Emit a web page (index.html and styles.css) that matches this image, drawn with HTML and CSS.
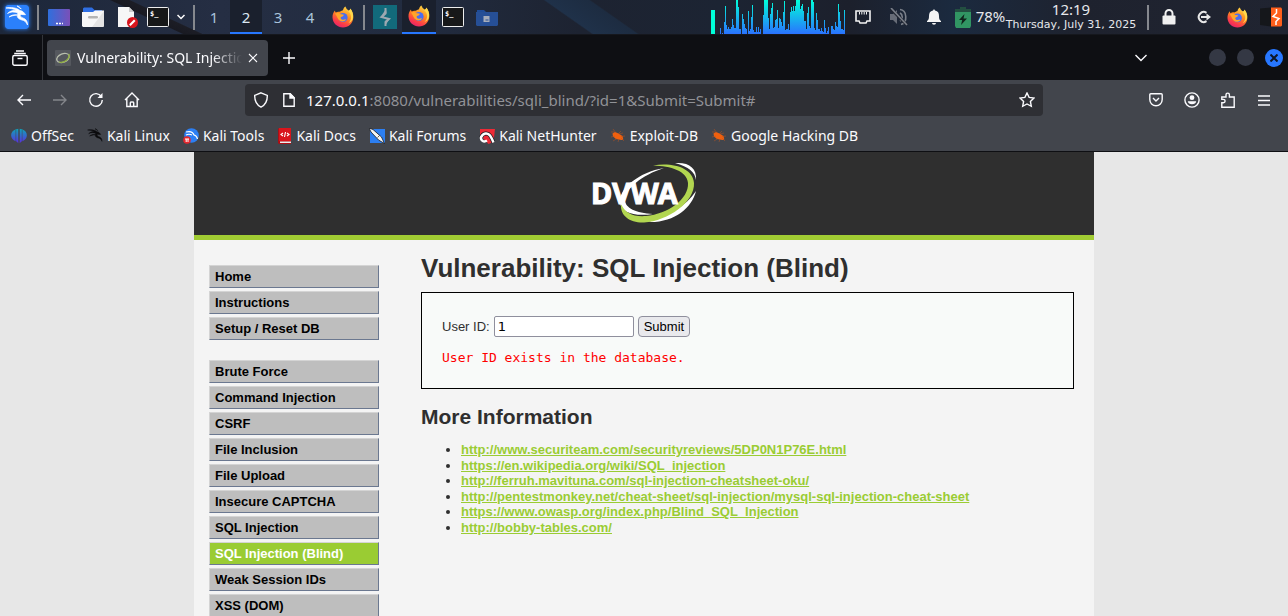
FILE: index.html
```html
<!DOCTYPE html>
<html lang="en">
<head>
<meta charset="utf-8">
<title>Vulnerability: SQL Injection (Blind)</title>
<link rel="stylesheet" href="styles.css">
</head>
<body>
<svg class="defs" width="0" height="0" aria-hidden="true">
  <defs>
    <linearGradient id="fox-body" x1="0.8" y1="0" x2="0.3" y2="1"><stop offset="0" stop-color="#ffe14a"/><stop offset="0.45" stop-color="#ff8a1e"/><stop offset="0.8" stop-color="#fb3a4b"/><stop offset="1" stop-color="#e3246c"/></linearGradient>
    <linearGradient id="app-grad"><stop offset="0" stop-color="#2f6fdd"/><stop offset="1" stop-color="#7a50b8"/></linearGradient>
    <linearGradient id="graph-grad" gradientUnits="userSpaceOnUse" x1="0" y1="0" x2="0" y2="34"><stop offset="0" stop-color="#00ffd9"/><stop offset="1" stop-color="#2a72ff"/></linearGradient>
    <linearGradient id="off-grad" x1="0" y1="0" x2="0" y2="1"><stop offset="0" stop-color="#0fa3b8"/><stop offset="1" stop-color="#5b2ce0"/></linearGradient>
  </defs>
  <symbol id="firefox" viewBox="0 0 22 22">
    <path d="M13.500 0.500c.4 2 1.700 3 3 4.300 1.500-.2 1.800-2.300 1.800-2.300 2 2.500 3.300 5.500 3 9C21 17.500 16.500 21.500 11 21.500S.7 17.300.5 11.500C.4 8.500 1.500 6 3 4.500c0 1 .3 1.600.8 2C5 5.500 6.500 5.500 7.500 5.800 9.500 5 10 4.500 11 4.200 11.300 2.500 12.300 1 13.500.5z" fill="url(#fox-body)"/>
    <path d="M14 1c0 3 4.500 5 5 9 .5 3.500-1 5.500-2.500 7 3-1 5-4 4.500-8-.3-3-1.500-5-2.700-6.200-.2 1-.8 2-1.800 2C15.500 4 14.300 2.800 14 1z" fill="#ffd84c"/>
    <circle cx="11" cy="11.500" r="4.600" fill="#4a6df0"/>
    <path d="M3 7.500c2-1 4.500-.5 5.500.8 1.500 0 3 .2 3.300.6-.3 1.300-2 1.600-3 2.300-.5.800.2 2 1.200 2.300 2 .6 3-.6 4-.2-1 2.300-4 2.700-6 1.500C5.500 13.500 5 10 3 7.500z" fill="#ffa52a"/>
  </symbol>
  <symbol id="terminal" viewBox="0 0 22 20">
    <rect x="0.500" y="0.500" width="21" height="19" rx="1" fill="#171819" stroke="#eee"/>
    <text x="3" y="9" font-family="DejaVu Sans Mono, monospace" font-weight="700" font-size="7" fill="#fff">$_</text>
  </symbol>
  <symbol id="dragon" viewBox="0 0 24 24">
    <path d="M1 3c5-1 10-.5 14 2.500 3 .5 4 2 5.500 4.200-1.500.3-3-.4-4.500-.3-2 1 .3 3 2 3.600 3 1 4.500 3 4.500 7-1.200-3-3-4.500-5.500-5-4-.8-6-3.500-4-7C9 6.500 5.500 6.800 2.500 8.500 5 5.800 8.500 5 12 5.500 8.500 3.800 5 3.200 1 3zM4 12c2.500-2 5-2.700 8-2-3 .2-5.300 1-8 2zM12 1c2 .5 3.300 1.600 4.200 3z" fill="currentColor" stroke="currentColor" stroke-width="0.700"/>
  </symbol>
  <symbol id="spider" viewBox="0 0 16 16">
    <path d="M2.500 5.500 5 4l3.500 1.500L12.500 8l.8 3.500L11.500 12 6 11 3 8.500z" fill="#f0600e"/>
    <path d="M3 1l3 4M1 4h3M1 9l4-1M3 13l4-2.500M8 14l1-3M14 13l-3-3M15 8l-4 .5M11 3L8 6M13 5l-4 1" stroke="#bd541e" stroke-width="0.500" fill="none"/>
  </symbol>
</svg>

<header class="panel">
  <div class="panel-group">
    <button class="slot" aria-label="Applications"><svg class="kali" width="24" height="24" viewBox="0 0 24 24"><rect width="24" height="24" rx="2" fill="#2b80fb"/><use href="#dragon" color="#fff"/></svg></button>
    <i class="sep"></i>
    <button class="slot" aria-label="Desktop"><svg width="22" height="17" viewBox="0 0 22 17"><rect width="22" height="17" rx="1" fill="url(#app-grad)"/><path d="M8 14.500h2M11 14.500h2M14 14.500h1" stroke="#fff" stroke-width="1.500"/></svg></button>
    <button class="slot" aria-label="Files"><svg width="22" height="20" viewBox="0 0 22 20"><path d="M1 6V1.500L2 .500h8l2.500 2.500H20V8H1z" fill="#2f6fe4"/><path d="M0 5h11l2-1.500h9V19l-1 1H1l-1-1z" fill="#f7f7f7"/><path d="M22 4v15l-1 1H10z" fill="#e4e4e4"/><rect x="6" y="9" width="10" height="2.500" rx="1.200" fill="#b4b4b4"/></svg></button>
    <button class="slot" aria-label="Text editor"><svg width="22" height="22" viewBox="0 0 22 22"><path d="M2 1h11l5 5v15H2z" fill="#f6f6f6"/><path d="M13 1l5 5h-5z" fill="#ccc"/><circle cx="16.500" cy="16.500" r="5.500" fill="#d8151d"/><path d="M13.800 19.200l5-5" stroke="#fff" stroke-width="2.200"/></svg></button>
    <button class="slot small" aria-label="Terminal"><svg width="22" height="20"><use href="#terminal"/></svg></button>
    <button class="slot tiny" aria-label="More terminals"><svg width="8" height="6" viewBox="0 0 8 6" fill="none" stroke="#fff" stroke-width="1.500"><path d="M.5 1L4 4.500 7.500 1"/></svg></button>
    <i class="sep"></i>
    <button class="ws">1</button><button class="ws active">2</button><button class="ws">3</button><button class="ws">4</button>
    <button class="slot" aria-label="Firefox"><svg width="22" height="22"><use href="#firefox"/></svg></button>
    <i class="sep"></i>
    <button class="slot" aria-label="Burp Suite"><svg width="24" height="24" viewBox="0 0 24 24"><rect width="24" height="24" fill="#126a7b"/><path d="M12.500 3v5.500l-4 3.500 7.500 2-3.500 3v4" stroke="#9ca8b1" stroke-width="2" fill="none"/><path d="M13 4l-5.500 8H10l3.500-4zM16.500 14l-4.500 7v-5z" fill="#9ca8b1"/></svg></button>
    <button class="slot active" aria-label="Firefox window"><svg width="22" height="22"><use href="#firefox"/></svg></button>
    <button class="slot" aria-label="Terminal window"><svg width="22" height="20"><use href="#terminal"/></svg></button>
    <button class="slot" aria-label="Folder window"><svg width="22" height="17" viewBox="0 0 22 17"><path d="M1 3V1h7l2 2h11v3H1z" fill="#1f4c97"/><path d="M0 3h22v13l-1 1H1l-1-1z" fill="#264f96"/><rect x="7.500" y="7" width="6" height="6" fill="#a6adbb"/><path d="M9.500 10.500h3v1h-3z" fill="#264f96"/></svg></button>
  </div>
  <div class="panel-group">
    <svg class="graph" width="134" height="34" viewBox="10 0 134 34" aria-label="CPU graph"><path d="M10 34V10h4v24z" fill="#00ffd9"/><path fill="none" stroke="url(#graph-grad)" d="M19.500 34v-6M21.500 34v-1M23.500 34v-12M24.500 34v-28M25.500 34v-9M26.500 34v-5M27.500 34v-7M28.500 34v-5M29.500 34v-5M30.500 34v-7M31.500 34v-15M32.500 34v-9M33.500 34v-6M34.500 34v-6M35.500 34v-34M36.500 34v-34M37.500 34v-27M38.500 34v-5M39.500 34v-5M41.500 34v-20M42.500 34v-15M43.500 34v-10M44.500 34v-6M45.500 34v-5M47.500 34v-23M48.500 34v-3M49.500 34v-5M50.500 34v-17M51.500 34v-29M52.500 34v-4M53.500 34v-2M54.500 34v-2M55.500 34v-7M56.500 34v-2M57.500 34v-7M58.500 34v-2M59.500 34v-5M62.500 34v-19M63.500 34v-34M64.500 34v-34M65.500 34v-34M66.500 34v-34M67.500 34v-16M68.500 34v-5M69.500 34v-20M70.500 34v-26M71.500 34v-31M72.500 34v-6M73.500 34v-7M74.500 34v-14M75.500 34v-15M76.500 34v-24M77.500 34v-6M78.500 34v-16M79.500 34v-15M80.500 34v-12M81.500 34v-8M82.500 34v-22M83.500 34v-33M84.500 34v-4M85.500 34v-5M86.500 34v-5M87.500 34v-10M88.500 34v-4M89.500 34v-22M90.500 34v-27M91.500 34v-23M92.500 34v-28M93.500 34v-23M94.500 34v-28M95.500 34v-34M96.500 34v-34M97.500 34v-34M98.500 34v-34M99.500 34v-25M100.500 34v-28M101.500 34v-30M102.500 34v-23M103.500 34v-13M104.500 34v-13M105.500 34v-5M106.500 34v-21M107.500 34v-27M108.500 34v-8M109.500 34v-6M110.500 34v-34M111.500 34v-34M112.500 34v-32M113.500 34v-6M114.500 34v-4M115.500 34v-21M116.500 34v-14M117.500 34v-5M118.500 34v-5M119.500 34v-3M120.500 34v-6M121.500 34v-3M122.500 34v-2M123.500 34v-14M124.500 34v-6M125.500 34v-1M126.500 34v-3M127.500 34v-7M130.500 34v-8M131.500 34v-8M132.500 34v-5M133.500 34v-4M134.500 34v-12M135.500 34v-8M136.500 34v-7M137.500 34v-30M138.500 34v-22M139.500 34v-13M140.500 34v-5M141.500 34v-5M142.500 34v-4M143.500 34v-24"/></svg>
    <button class="slot wide" aria-label="Network"><svg width="16" height="14" viewBox="0 0 16 14"><path d="M1 1h14v10h-3l-1 2H5l-1-2H1z" fill="none" stroke="#f3f3f3" stroke-width="1.600"/><path d="M4.500 2v2.500M6.800 2v2.500M9.200 2v2.500M11.500 2v2.500" stroke="#f3f3f3"/></svg></button>
    <button class="slot wide" aria-label="Muted"><svg width="18" height="18" viewBox="0 0 18 18" fill="none" stroke="#7b808a" stroke-width="1.600"><path d="M0 6h3l4-4v14l-4-4H0z" fill="#676c77" stroke="none"/><path d="M10 5c3 1.500 3 6.500 0 8M10 1.500c7 .5 8 13 1 15"/><path d="M1 1l16 16" stroke="#20242f" stroke-width="3"/><path d="M1 0l16 17"/></svg></button>
    <button class="slot" aria-label="Notifications"><svg width="14" height="16" viewBox="0 0 14 16" fill="#f4f4f4"><path d="M7 0l1 1.500c3 .6 4 2.500 4 5.500 0 3 .5 4 2 5v1H0v-1c1.500-1 2-2 2-5 0-3 1-4.900 4-5.500zM5 14h4a2 1.800 0 0 1-4 0z"/></svg></button>
    <button class="slot narrow" aria-label="Battery"><svg width="16" height="21" viewBox="0 0 16 21"><path d="M5 0h6v2h5v3H0V2h5z" fill="#234f41"/><path d="M0 5h16v14l-1 2H1l-1-2z" fill="#319563"/><path d="M9.500 7L4 13h3.200L6 18l6-6.500H8.500z" fill="#10241c"/></svg></button>
    <span class="percent">78%</span>
    <div class="clock"><span class="time">12:19</span><span class="date">Thursday, July 31, 2025</span></div>
    <i class="sep"></i>
    <button class="slot" aria-label="Lock"><svg width="14" height="16" viewBox="0 0 14 16"><path d="M3.500 7V4.500a3.500 3.500 0 0 1 7 0V7" fill="none" stroke="#f0f0f0" stroke-width="2"/><rect x="0.500" y="6.500" width="13" height="9" rx="1" fill="#f0f0f0"/></svg></button>
    <button class="slot" aria-label="Log out"><svg width="15" height="14" viewBox="0 0 15 14" fill="none" stroke="#e8e8e8" stroke-width="2"><path d="M10.500 2.800a5 5 0 1 0 0 8.400M5 7h6"/><path d="M10.500 3.500L15 7l-4.500 3.500z" fill="#e8e8e8" stroke="none"/></svg></button>
    <button class="slot" aria-label="Firefox status"><svg width="21" height="21"><use href="#firefox"/></svg></button>
    <button class="slot" aria-label="Burp status"><svg width="22" height="20" viewBox="0 0 22 20"><path d="M0 1.500L11 .500v19L0 18z" fill="#15171b"/><path d="M11 .500h10l1 1v17l-1 1H11z" fill="#ff5f1b"/><path d="M16.500 2v4l-3.500 3.500 6 2-3 3V18" fill="none" stroke="#fff" stroke-width="1.500"/></svg></button>
  </div>
</header>

<nav class="tabs" aria-label="Browser tabs">
  <button class="view" aria-label="Firefox view"><svg width="16" height="16" viewBox="0 0 16 16" fill="none" stroke="#fbfbfe" stroke-width="1.400"><path d="M4 1h8M2.200 3.500h11.600"/><rect x="0.800" y="5.500" width="14.400" height="9.700" rx="1.500"/><path d="M5.500 8.500h5"/></svg></button>
  <div class="tab">
    <svg width="16" height="16" viewBox="0 0 16 16"><rect width="16" height="16" rx="1" fill="#55585e"/><ellipse cx="8" cy="8" rx="6.500" ry="4.200" transform="rotate(-22 8 8)" fill="none" stroke="#b9bfae" stroke-width="1.200"/><path d="M4 12c5 1.500 11-3 10-8" fill="none" stroke="#8eae3d" stroke-width="1.300"/></svg>
    <span class="tab-title">Vulnerability: SQL Injection (Blind)</span>
    <button class="close-tab" aria-label="Close tab"><svg width="10" height="10" viewBox="0 0 10 10" stroke="#fbfbfe" stroke-width="1.100"><path d="M1 1l8 8M9 1L1 9"/></svg></button>
  </div>
  <button class="new-tab" aria-label="New tab"><svg width="12" height="12" viewBox="0 0 12 12" stroke="#fbfbfe" stroke-width="1.400"><path d="M0 6h12M6 0v12"/></svg></button>
  <div class="window-buttons">
    <button class="list-tabs" aria-label="List tabs"><svg width="12" height="8" viewBox="0 0 12 8" fill="none" stroke="#fbfbfe" stroke-width="1.400"><path d="M.5 1L6 6.500 11.500 1"/></svg></button>
    <button class="dot" aria-label="Minimize"></button>
    <button class="dot" aria-label="Maximize"></button>
    <button class="dot close" aria-label="Close window"><svg width="8" height="8" viewBox="0 0 8 8" stroke="#0e1726" stroke-width="2"><path d="M.5.5l7 7M7.500.5l-7 7"/></svg></button>
  </div>
</nav>

<div class="toolbar">
  <div class="tools">
    <button aria-label="Back"><svg width="14" height="12" viewBox="0 0 14 12"><path d="M14 6H1M6 1L1 6l5 5"/></svg></button>
    <button class="off" aria-label="Forward"><svg width="14" height="12" viewBox="0 0 14 12"><path d="M0 6h13M8 1l5 5-5 5"/></svg></button>
    <button aria-label="Reload"><svg width="16" height="16" viewBox="0 0 16 16"><path d="M13.300 4.500A6.300 6.300 0 1 0 14.300 8"/><path d="M14.500 1v5h-5z" fill="currentColor" stroke="none"/></svg></button>
    <button aria-label="Home"><svg width="16" height="16" viewBox="0 0 16 16"><path d="M1 8l7-7 7 7M2.800 6.500v8h10.400v-8M6.300 14.500v-3.700c0-1 3.400-1 3.400 0v3.700"/></svg></button>
  </div>
  <div class="address">
    <svg width="16" height="16" viewBox="0 0 16 16"><path d="M8 .8l6.300 2.600c.2 6-1.600 9.500-6.300 11.800C3.300 12.900 1.500 9.400 1.700 3.400z"/></svg>
    <svg class="page-icon" width="12" height="14" viewBox="0 0 12 14"><path d="M.8.8h6.400l4 4v8.400H.8z"/><path d="M7 .8v4.200h4.200z" fill="currentColor"/></svg>
    <span class="url"><b>127.0.0.1</b>:8080/vulnerabilities/sqli_blind/?id=1&amp;Submit=Submit#</span>
    <svg width="16" height="16" viewBox="0 0 16 16"><path d="M8 1l2.100 4.400 4.900.6-3.600 3.400.9 4.900L8 12l-4.300 2.300.9-4.900L1 6l4.900-.6z"/></svg>
  </div>
  <div class="tools end">
    <button aria-label="Pocket"><svg width="14" height="14" viewBox="0 0 14 14"><path d="M.8 1.800q0-1 1-1h10.400q1 0 1 1V6.500a6.200 6.200 0 0 1-12.400 0zM4 5l3 3 3-3"/></svg></button>
    <button aria-label="Account"><svg width="16" height="16" viewBox="0 0 16 16"><circle cx="8" cy="8" r="7.100"/><circle cx="8" cy="5.700" r="2.400" fill="currentColor" stroke="none"/><path d="M3.800 9.200h8.400c0 4-8.400 4-8.400 0z" fill="currentColor" stroke="none"/></svg></button>
    <button aria-label="Extensions"><svg width="14" height="16" viewBox="0 0 14 16"><path d="M.8 15.200v-4.400h1.600a1.700 1.700 0 0 0 0-3.400H.8V5H5V2.800a1.700 1.700 0 0 1 3.400 0V5h4.800v10.200z"/></svg></button>
    <button aria-label="Menu"><svg width="12" height="11" viewBox="0 0 12 11"><path d="M0 1h12M0 5.500h12M0 10h12"/></svg></button>
  </div>
</div>

<nav class="bookmarks" aria-label="Bookmarks">
  <a href="#"><svg width="16" height="16" viewBox="0 0 16 16"><path fill="url(#off-grad)" d="M7.300.8v14.400L5.600 13.600C-1.500 12 -1.500 3.500 4.500 1.500zM8.700.8v14.400l1.700-1.600c7.100-1.600 7.100-10.100 1.100-12.100z"/><path d="M4.800 2v11M11.200 2v11" stroke="#42454c" stroke-width="0.500"/></svg>OffSec</a>
  <a href="#"><svg width="16" height="16" color="#0b0b0d"><use href="#dragon"/></svg>Kali Linux</a>
  <a href="#"><svg width="16" height="16" viewBox="0 0 16 16"><circle cx="8.500" cy="7.500" r="7.300" fill="#2c7ff3"/><path d="M3 4c4-1 7 0 8 3 2 .5 3 1.500 3.500 4M3 7c2-1 4-1 6 0" stroke="#fff" fill="none" stroke-width="1.200"/><circle cx="4" cy="12" r="3.800" fill="#e5272d"/><path d="M2 11h4M3.200 11v3M5 11v3" stroke="#fff" fill="none"/></svg>Kali Tools</a>
  <a href="#"><svg width="15" height="16" viewBox="0 0 15 16"><path d="M2 0h12v13H2z" fill="#d9151c"/><path d="M1 1l1-1v13h12v3H2l-1-1z" fill="#ac0f15"/><path d="M3 13.500h11v1.500H3z" fill="#eee"/><path d="M6 5L4 6.500 6 8M10 5l2 1.500L10 8M8.500 4l-1 5" stroke="#fff" fill="none" stroke-width="1.100"/></svg>Kali Docs</a>
  <a href="#"><svg width="16" height="16" viewBox="0 0 16 16"><path d="M1 1h15v14H1z" fill="#2c7ff3"/><path d="M0 0l4 1.500L12.500 9l3 6.500L9.500 12 2 4z" fill="#f4f4f4" stroke="#16191f" stroke-width="0.800"/><path d="M8.500 9.500l2-2" stroke="#333" stroke-width="0.800"/></svg>Kali Forums</a>
  <a href="#"><svg width="16" height="16" viewBox="0 0 16 16"><path d="M1 1h15l-1.500 13-5 2L1 7z" fill="#ee2a36"/><path d="M2 9.500C4 4.500 9 4.500 11 7.500s2.500 4.500 3.500 7" fill="none" stroke="#1c1c20" stroke-width="4"/><path d="M2 9.500C4 4.500 9 4.500 11 7.500s2.500 4.500 3.500 7M2 9c-.5 4 3 5.500 6 3.500" fill="none" stroke="#fff" stroke-width="2.400"/></svg>Kali NetHunter</a>
  <a href="#"><svg width="16" height="16"><use href="#spider"/></svg>Exploit-DB</a>
  <a href="#"><svg width="16" height="16"><use href="#spider"/></svg>Google Hacking DB</a>
</nav>

<div class="page">
  <div class="container">
    <div class="banner">
      <svg width="106" height="62" viewBox="0 0 106 62" role="img" aria-label="DVWA">
        <path d="M73 6C48 10 27 27 29 41c1 9 14 14 33 11-17-1-28-6-28-14C34 27 51 13 73 6z" fill="#fff"/>
        <path d="M84 1c14-1 22 5 21 17-1-8-7-13-21-17zM105 29c-4 17-22 32-48 31 20-5 38-16 48-31z" fill="#fff"/>
        <path d="M62 3.500C82 0 102 6 103 21c1 19-26 38-50 39.500C39 61 29 54 30 42c4 9 12 13 25 12 22-2 43-17 42-33C96 9 80 4 62 3.500z" fill="#b2d650"/>
        <text x="0" y="42" font-family="Noto Sans, sans-serif" font-size="29" font-weight="700" fill="#fff" stroke="#fff">DVWA</text>
      </svg>
    </div>
    <div class="columns">
      <nav class="menu" aria-label="DVWA menu">
        <ul>
          <li><a href="#">Home</a></li>
          <li><a href="#">Instructions</a></li>
          <li><a href="#">Setup / Reset DB</a></li>
        </ul>
        <ul>
          <li><a href="#">Brute Force</a></li>
          <li><a href="#">Command Injection</a></li>
          <li><a href="#">CSRF</a></li>
          <li><a href="#">File Inclusion</a></li>
          <li><a href="#">File Upload</a></li>
          <li><a href="#">Insecure CAPTCHA</a></li>
          <li><a href="#">SQL Injection</a></li>
          <li><a href="#" class="selected">SQL Injection (Blind)</a></li>
          <li><a href="#">Weak Session IDs</a></li>
          <li><a href="#">XSS (DOM)</a></li>
        </ul>
      </nav>
      <main class="content">
        <h1>Vulnerability: SQL Injection (Blind)</h1>
        <div class="vulnerable">
          <form action="#">
            <label for="uid">User ID:</label>
            <input id="uid" type="text" name="id" value="1">
            <button class="submit" type="submit">Submit</button>
          </form>
          <pre>User ID exists in the database.</pre>
        </div>
        <h2>More Information</h2>
        <ul class="links">
          <li><a href="#">http://www.securiteam.com/securityreviews/5DP0N1P76E.html</a></li>
          <li><a href="#">https://en.wikipedia.org/wiki/SQL_injection</a></li>
          <li><a href="#">http://ferruh.mavituna.com/sql-injection-cheatsheet-oku/</a></li>
          <li><a href="#">http://pentestmonkey.net/cheat-sheet/sql-injection/mysql-sql-injection-cheat-sheet</a></li>
          <li><a href="#">https://www.owasp.org/index.php/Blind_SQL_Injection</a></li>
          <li><a href="#">http://bobby-tables.com/</a></li>
        </ul>
      </main>
    </div>
  </div>
</div>
</body>
</html>
```

FILE: styles.css
```css
* { box-sizing: border-box; }
html, body { height: 100%; }
body {
  margin: 0;
  display: flex;
  flex-direction: column;
  overflow: hidden;
  background: #e7e7e7;
  font-family: "Noto Sans", sans-serif;
  font-size: 14px;
}
button { border: 0; padding: 0; background: none; color: inherit; font: inherit; }
svg { display: block; flex: none; }
.defs { position: absolute; }

/* Desktop panel */
.panel {
  flex: none;
  display: flex;
  justify-content: space-between;
  height: 35px;
  border-bottom: 1px solid #15171d;
  color: #e6e8ec;
  background:
    linear-gradient(25deg, transparent 46%, #191a22 47%, #1c1d25 54%, transparent 55%) 70px 0 / 170px 34px no-repeat,
    linear-gradient(35deg, transparent 40%, #1f3149 41%, #1d2c41 60%, transparent 61%) 500px 0 / 180px 34px no-repeat,
    linear-gradient(90deg, #1d273a 0, #252e43 17%, #222c40 32%, #1d2331 45%, #1c2433 56%, #1c202c 66%, #1b2a3f 74%, #1e222e 84%, #202431 100%);
}
.panel-group { display: flex; align-items: stretch; }
.slot { width: 34px; display: flex; align-items: center; justify-content: center; }
.slot.wide { width: 36px; }
.slot.small { width: 28px; }
.slot.tiny { width: 18px; }
.slot.narrow { width: 24px; }
.kali { border-radius: 3px; box-shadow: 0 0 4px #2b80fb; }
.sep { width: 8px; display: flex; align-items: center; justify-content: center; }
.sep::before { content: ""; width: 2px; height: 25px; background: #85888e; }
.ws { width: 32px; color: #a9c4dc; font-size: 15px; }
.active { background: #1a202d; border-bottom: 2px solid #2777ff; }
.ws.active { color: #dbe7f2; padding-top: 2px; }
.percent { width: 31px; font-size: 15px; line-height: 33px; text-align: center; }
.clock { width: 130px; margin-right: 8px; display: flex; flex-direction: column; align-items: center; white-space: nowrap; }
.time { font-size: 15px; line-height: 19px; }
.date { font-family: "DejaVu Sans", sans-serif; font-size: 11px; line-height: 11px; }

/* Tab strip */
.tabs { flex: none; display: flex; align-items: center; height: 45px; background: #0e0f13; color: #fbfbfe; }
.view { width: 43px; align-self: stretch; display: flex; align-items: center; justify-content: center; padding-right: 2px; border-right: 1px solid #33353a; }
.tab { width: 221px; height: 36px; margin-left: 4px; padding: 0 10px 0 8px; display: flex; align-items: center; gap: 6px; border-radius: 4px; background: #42454c; }
.tab-title { flex: 1; overflow: hidden; white-space: nowrap; mask-image: linear-gradient(90deg, #000 82%, transparent); }
.close-tab { width: 10px; display: flex; justify-content: center; }
.new-tab { width: 42px; display: flex; justify-content: center; }
.window-buttons { margin-left: auto; padding-right: 5px; display: flex; align-items: center; gap: 11px; }
.list-tabs { margin-right: 51px; }
.dot { width: 17px; height: 17px; border-radius: 50%; background: #343844; }
.dot.close { width: 18px; height: 18px; display: flex; align-items: center; justify-content: center; background: #2777ff; }

/* Navigation toolbar */
.toolbar { flex: none; display: grid; grid-template-columns: 245px 1fr 245px; align-items: center; height: 40px; background: #42454c; color: #fbfbfe; }
.toolbar svg { fill: none; stroke: currentColor; stroke-width: 1.4; }
.tools { display: flex; padding: 0 6px; }
.tools.end { justify-content: flex-end; }
.tools button { width: 36px; display: flex; align-items: center; justify-content: center; }
.tools .off { color: #84868b; }
.address { display: flex; align-items: center; height: 32px; padding: 0 8px; border-radius: 4px; background: #2e2f34; }
.page-icon { margin: 0 11px 0 14px; }
.url { flex: 1; font-size: 15px; color: #919297; white-space: nowrap; overflow: hidden; }
.url b { font-weight: 400; color: #fbfbfe; }

/* Bookmarks */
.bookmarks { flex: none; display: flex; align-items: center; gap: 13px; height: 32px; padding: 0 11px; border-bottom: 1px solid #0e0f13; background: #42454c; }
.bookmarks a { display: flex; align-items: center; gap: 4px; color: #fbfbfe; text-decoration: none; white-space: nowrap; }

/* Web page */
.page { flex: 1; min-height: 0; overflow: hidden; font-family: "Liberation Sans", Arial, sans-serif; font-size: 13px; color: #2f2f2f; }
.container { max-width: 900px; min-height: 100%; margin: 0 auto; background: #f4f4f4; }
.banner { display: flex; justify-content: center; padding: 10px 0 11px; background: #2f2f2f; border-bottom: 5px solid #a1cc33; }
.columns { display: flex; gap: 42px; padding: 0 20px 0 15px; }
.menu { flex: none; width: 170px; padding-top: 25px; }
.menu ul { list-style: none; margin: 0 0 20px; padding: 0; display: flex; flex-direction: column; gap: 3px; }
.menu a {
  display: block;
  height: 23px;
  padding-left: 5px;
  border: 1px solid;
  border-color: #d4d4d4 #6b7890 #6b7890 #d4d4d4;
  background: #bebebe;
  color: #000;
  font-weight: 700;
  line-height: 21px;
  text-decoration: none;
}
.menu .selected { background: #9acc33; color: #fff; }
.content { flex: 1; min-width: 0; padding-top: 13px; }
h1 { margin: 0 0 9px; font-size: 26px; line-height: 30px; }
h2 { margin: 16px 0 13px; font-size: 21px; line-height: 24px; }
.vulnerable { padding: 23px 20px; border: 1px solid #000; background: #f8faf9; }
form { display: flex; align-items: center; gap: 4px; }
label { line-height: 20px; }
form input { width: 140px; height: 21px; padding: 0 3px; border: 1px solid #8f8f9d; border-radius: 2px; background: #fff; color: #000; font: 13px "DejaVu Sans", sans-serif; }
.submit { height: 21px; padding: 0 5px; border: 1px solid #8f8f9d; border-radius: 4px; background: #e9e9ed; color: #000; }
pre { margin: 13px 0 0; color: #f00; font: 13px/15px "DejaVu Sans Mono", monospace; }
.links { margin: 0; padding-left: 40px; line-height: 1.2; }
.links a { color: #9acc33; font-weight: 700; }
```
